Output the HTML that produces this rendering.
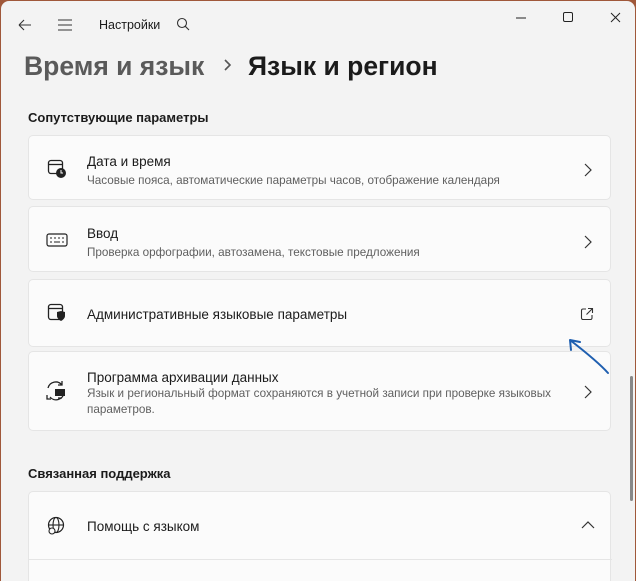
<!DOCTYPE html><html><head><style>
*{margin:0;padding:0;box-sizing:border-box}
body{width:636px;height:576px;background:#a0583a;font-family:"Liberation Sans",sans-serif;overflow:hidden;position:relative}
.win{position:absolute;left:1px;top:1px;width:634px;height:580px;background:#f3f3f3;border-radius:8px 8px 0 0;overflow:hidden}
.abs{position:absolute}
.card{position:absolute;left:27px;width:583px;background:#fbfbfb;border:1px solid #e5e5e5;border-radius:5px}
.t{position:absolute;left:58px;font-size:13.5px;color:#1b1b1b}
.s{position:absolute;left:58px;font-size:11.7px;color:#5f5f5f;line-height:16px}
.chev{position:absolute;left:554px}
.h{position:absolute;left:27px;font-size:13px;font-weight:bold;color:#1b1b1b}
</style></head><body><div class="win">
<svg class="abs" style="left:16px;top:16px" width="16" height="16"><path d="M2 8H14M2 8L7 3M2 8L7 13" stroke="#333" fill="none" stroke-width="1.1"/></svg>
<svg class="abs" style="left:56px;top:16px" width="16" height="16"><path d="M1 3H15M1 8H15M1 13H15" stroke="#333" stroke-width="1.1"/></svg>
<div class="abs" style="left:98px;top:17px;font-size:12.5px;color:#1b1b1b">Настройки</div>
<svg class="abs" style="left:175px;top:16px" width="14" height="14"><circle cx="6" cy="6" r="4.5" stroke="#333" fill="none" stroke-width="1.1"/><path d="M9.3 9.3L13 13" stroke="#333" stroke-width="1.1"/></svg>
<svg class="abs" style="left:513px;top:10px" width="120" height="16"><path d="M2 7H12" stroke="#222"/><rect x="49.5" y="1.5" width="9" height="9" rx="1.5" stroke="#222" fill="none"/><path d="M97 2L106 11M106 2L97 11" stroke="#222"/></svg>
<div class="abs" style="left:23px;top:50px;font-size:26.5px;color:#5a5a5a;font-weight:bold">Время и язык</div>
<svg class="abs" style="left:222px;top:57px" width="10" height="14"><path d="M2 2L7 7L2 12" stroke="#555" fill="none" stroke-width="1.6"/></svg>
<div class="abs" style="left:247px;top:50px;font-size:26.5px;color:#1b1b1b;font-weight:bold">Язык и регион</div>
<div class="h" style="top:109px">Сопутствующие параметры</div>
<div class="card" style="top:134px;height:65px">
<svg class="abs" style="left:18px;top:22px" width="20" height="20"><rect x="1.5" y="2.5" width="14" height="13" rx="2.5" stroke="#222" fill="none" stroke-width="1.3"/><path d="M1.5 6.5H15.5" stroke="#222" stroke-width="1.3"/><circle cx="14" cy="15" r="5" fill="#222"/><path d="M14 12V15H16" stroke="#fff" fill="none"/></svg>
<div class="t" style="top:18px">Дата и время</div><div class="s" style="top:37px">Часовые пояса, автоматические параметры часов, отображение календаря</div>
<svg class="chev" style="top:27px" width="10" height="14"><path d="M2 1L8 7L2 13" stroke="#333" fill="none" stroke-width="1.2"/></svg></div>
<div class="card" style="top:205px;height:66px">
<svg class="abs" style="left:17px;top:26px" width="22" height="14"><rect x="1" y="1" width="20" height="12" rx="2" stroke="#222" fill="none" stroke-width="1.2"/><path d="M4 5H6M8 5H10M12 5H14M16 5H18M4 9H6M8 9H14M16 9H18" stroke="#222"/></svg>
<div class="t" style="top:19px">Ввод</div><div class="s" style="top:38px">Проверка орфографии, автозамена, текстовые предложения</div>
<svg class="chev" style="top:28px" width="10" height="14"><path d="M2 1L8 7L2 13" stroke="#333" fill="none" stroke-width="1.2"/></svg></div>
<div class="card" style="top:278px;height:68px">
<svg class="abs" style="left:18px;top:23px" width="20" height="20"><rect x="1.5" y="1.5" width="14" height="15" rx="2.5" stroke="#222" fill="none" stroke-width="1.3"/><path d="M1.5 5.5H15.5" stroke="#222" stroke-width="1.3"/><path d="M10 9L14 8L18 9V13C18 16 14 18 14 18C14 18 10 16 10 13Z" fill="#222"/></svg>
<div class="t" style="top:27px">Административные языковые параметры</div>
<svg class="abs" style="left:551px;top:27px" width="14" height="14"><path d="M6 2H3A1.5 1.5 0 0 0 1.5 3.5V11A1.5 1.5 0 0 0 3 12.5H10.5A1.5 1.5 0 0 0 12 11V8M8 1.5H12.5V6M12.5 1.5L6.5 7.5" stroke="#333" fill="none" stroke-width="1.1"/></svg></div>
<div class="card" style="top:350px;height:80px">
<svg class="abs" style="left:16px;top:28px" width="22" height="22"><path d="M3 8A8 8 0 0 1 17 5M17 1V5H13M19 13A8 8 0 0 1 5 17" stroke="#222" fill="none" stroke-width="1.3"/><rect x="10" y="9" width="10" height="7" fill="#222"/><path d="M13 18H17M2 15V19H6" stroke="#222" fill="none" stroke-width="1.3"/></svg>
<div class="t" style="top:18px">Программа архивации данных</div><div class="s" style="top:34px;width:490px">Язык и региональный формат сохраняются в учетной записи при проверке языковых параметров.</div>
<svg class="chev" style="top:33px" width="10" height="14"><path d="M2 1L8 7L2 13" stroke="#333" fill="none" stroke-width="1.2"/></svg></div>
<svg class="abs" style="left:555px;top:325px" width="55" height="50"><path d="M52 47C44 38 32 28 14 14M14 14L15 24M14 14L24 16" stroke="#1f5fb0" fill="none" stroke-width="2" stroke-linecap="round"/></svg>
<div class="h" style="top:465px">Связанная поддержка</div>
<div class="card" style="top:490px;height:100px">
<svg class="abs" style="left:17px;top:24px" width="20" height="20"><circle cx="10" cy="9" r="7.5" stroke="#222" fill="none" stroke-width="1.2"/><ellipse cx="10" cy="9" rx="3" ry="7.5" stroke="#222" fill="none" stroke-width="1.1"/><path d="M2.5 9H17.5" stroke="#222" stroke-width="1.1"/><circle cx="6" cy="15" r="3" fill="#fbfbfb" stroke="#222" stroke-width="1.1"/></svg>
<div class="t" style="top:27px">Помощь с языком</div>
<svg class="abs" style="left:552px;top:29px" width="14" height="10"><path d="M1 7L7 1L13 7" stroke="#333" fill="none" stroke-width="1.2"/></svg>
<div class="abs" style="left:0;top:67px;width:583px;border-top:1px solid #e5e5e5"></div></div>
<div class="abs" style="left:629px;top:375px;width:3px;height:125px;background:#888;border-radius:2px"></div>
</div></body></html>
